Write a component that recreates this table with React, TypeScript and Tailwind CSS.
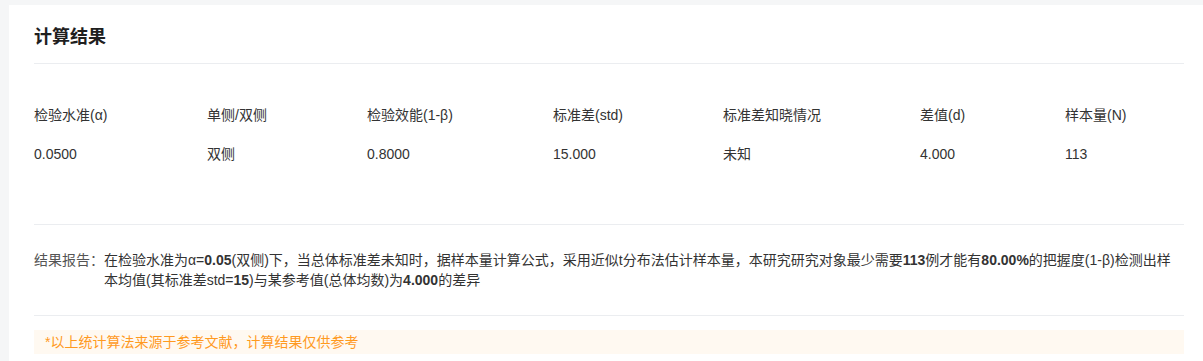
import React from "react";

type Param = { label: string; value: string };

const params: Param[] = [
  { label: "检验水准(α)", value: "0.0500" },
  { label: "单侧/双侧", value: "双侧" },
  { label: "检验效能(1-β)", value: "0.8000" },
  { label: "标准差(std)", value: "15.000" },
  { label: "标准差知晓情况", value: "未知" },
  { label: "差值(d)", value: "4.000" },
  { label: "样本量(N)", value: "113" },
];

const font = {
  fontFamily: '"Liberation Sans", "Noto Sans CJK SC", sans-serif',
};

export default function App() {
  return (
    <div className="min-h-[361px] bg-[#f5f6f7] pl-[9px] pt-[5px]" style={font}>
      <section className="bg-white pl-[25px] pr-[19px] pt-[20px] pb-4 text-[14px] text-[#333]">
        <h2 className="text-[18px] font-bold leading-[24px] text-[#1f1f1f]">计算结果</h2>
        <div className="mt-[14px] border-t border-[#ebedf0]" />

        {/* parameter table */}
        <div className="grid grid-cols-[173px_160px_186px_170px_197px_145px_1fr] pt-[31px] pb-[49px]">
          {params.map((p) => (
            <div key={p.label} className="flex flex-col">
              <div className="h-10 leading-[40px]">{p.label}</div>
              <div className="h-10 leading-[38px]">{p.value}</div>
            </div>
          ))}
        </div>

        <div className="border-t border-[#ebedf0]" />

        <div className="flex py-[25px] leading-[20px]">
          <span className="shrink-0 text-[#555]">结果报告：</span>
          <p>
            在检验水准为α=<b>0.05</b>(双侧)下，当总体标准差未知时，据样本量计算公式，采用近似t分布法估计样本量，本研究研究对象最少需要
            <b>113</b>例才能有<b>80.00%</b>的把握度(1-β)检测出样本均值(其标准差std=<b>15</b>)与某参考值(总体均数)为<b>4.000</b>的差异
          </p>
        </div>

        <div className="border-t border-[#ebedf0]" />

        <div className="mt-[14px] bg-[#fff9f1] px-[11px] leading-[24px] text-[#ff9a1f]">
          *以上统计算法来源于参考文献，计算结果仅供参考
        </div>
      </section>
    </div>
  );
}
